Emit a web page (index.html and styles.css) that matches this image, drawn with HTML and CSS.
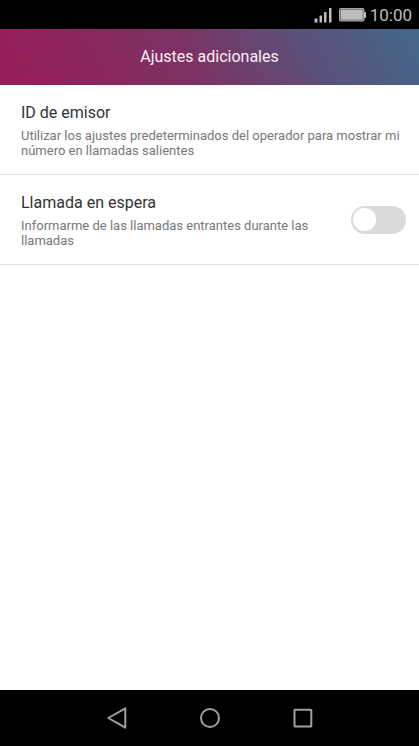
FILE: index.html
```html
<!DOCTYPE html>
<html lang="es">

<head>
    <meta charset="UTF-8">
    <meta name="viewport" content="width=device-width, initial-scale=1.0">
    <title>Ajustes adicionales</title>
    <link rel="stylesheet" href="styles.css">
</head>

<body>
    <div class="status-bar">
        <svg class="signal" width="18" height="16" viewBox="0 0 18 16" fill="#bdbdbd">
            <rect x="0.5" y="11.5" width="3" height="4" rx="0.5" />
            <rect x="5.5" y="8.5" width="2.5" height="7" rx="0.5" />
            <rect x="10" y="5" width="2.5" height="10.5" rx="0.5" />
            <rect x="15" y="1" width="2.5" height="14.5" rx="0.5" />
        </svg>
        <svg class="battery" width="27" height="14" viewBox="0 0 27 14">
            <rect x="0.5" y="0.5" width="24.5" height="12.5" rx="1" fill="#bdbdbd" stroke="#a8a8a8" />
            <rect x="1.5" y="1.5" width="22.5" height="10.5" fill="none" stroke="#555" stroke-width="0.6" />
            <rect x="25" y="4" width="2" height="6" rx="0.5" fill="#bdbdbd" />
        </svg>
        <span class="time">10:00</span>
    </div>

    <header class="header">
        <h1>Ajustes adicionales</h1>
    </header>

    <main class="settings">
        <div class="row">
            <div class="row-text">
                <h2>ID de emisor</h2>
                <p>Utilizar los ajustes predeterminados del operador para mostrar mi número en llamadas salientes</p>
            </div>
        </div>
        <div class="row">
            <div class="row-text">
                <h2><label for="call-waiting">Llamada en espera</label></h2>
                <p id="call-waiting-desc">Informarme de las llamadas entrantes durante las llamadas</p>
            </div>
            <input class="switch" type="checkbox" id="call-waiting" aria-describedby="call-waiting-desc">
        </div>
    </main>

    <nav class="nav-bar">
        <button type="button" aria-label="Atrás">
            <svg width="24" height="24" viewBox="0 0 24 24">
                <path d="M20.3 2.3V21.7L3.3 12Z" />
            </svg>
        </button>
        <button type="button" aria-label="Inicio">
            <svg width="24" height="24" viewBox="0 0 24 24">
                <circle cx="12" cy="12" r="9" />
            </svg>
        </button>
        <button type="button" aria-label="Recientes">
            <svg width="24" height="24" viewBox="0 0 24 24">
                <rect x="3.5" y="3.7" width="16.8" height="16.8" rx="0.5" />
            </svg>
        </button>
    </nav>
</body>

</html>
```
FILE: styles.css
```css
body,
h1,
h2,
p {
    margin: 0;
    padding: 0;
    font-weight: 400;
}

body {
    display: flex;
    flex-direction: column;
    min-height: 100vh;
    background: #fff;
    font-family: Roboto, "Liberation Sans", sans-serif;
}

.status-bar {
    display: flex;
    align-items: center;
    justify-content: flex-end;
    height: 29px;
    padding-right: 7px;
    background: #000;
    color: #bdbdbd;
}

.battery {
    margin: 0 4px 0 7px;
}

.time {
    font-size: 17px;
    line-height: 20px;
}

.header {
    padding: 16px;
    background: linear-gradient(60deg, #961e59 5%, #7c3263 45%, #5b5079 72%, #42688b 100%);
    color: #fbeef5;
    text-align: center;
}

.header h1 {
    font-size: 16px;
    line-height: 24px;
}

.settings {
    flex: 1;
}

.row {
    display: flex;
    align-items: center;
    padding: 16px 13px 16px 21px;
    border-bottom: 1px solid #e0e0e0;
}

.row-text {
    flex: 1;
}

.row h2 {
    color: #333;
    font-size: 16px;
    line-height: 24px;
}

.row p {
    margin-top: 3px;
    color: #777;
    font-size: 13px;
    line-height: 15px;
}

.switch {
    display: flex;
    align-items: center;
    flex: none;
    box-sizing: border-box;
    width: 55px;
    height: 28px;
    margin: 0 0 0 24px;
    padding: 0 2px;
    border-radius: 14px;
    background: #dadada;
    appearance: none;
}

.switch::before {
    content: "";
    width: 23px;
    height: 23px;
    border-radius: 50%;
    background: #fff;
}

.switch:checked {
    justify-content: flex-end;
    background: #981d58;
}

.nav-bar {
    display: flex;
    justify-content: center;
    height: 56px;
    background: #000;
}

.nav-bar button {
    display: flex;
    align-items: center;
    justify-content: center;
    width: 93px;
    padding: 0;
    border: 0;
    background: none;
}

.nav-bar svg {
    fill: none;
    stroke: #a0a0a0;
    stroke-width: 2;
    stroke-linejoin: round;
}
```
